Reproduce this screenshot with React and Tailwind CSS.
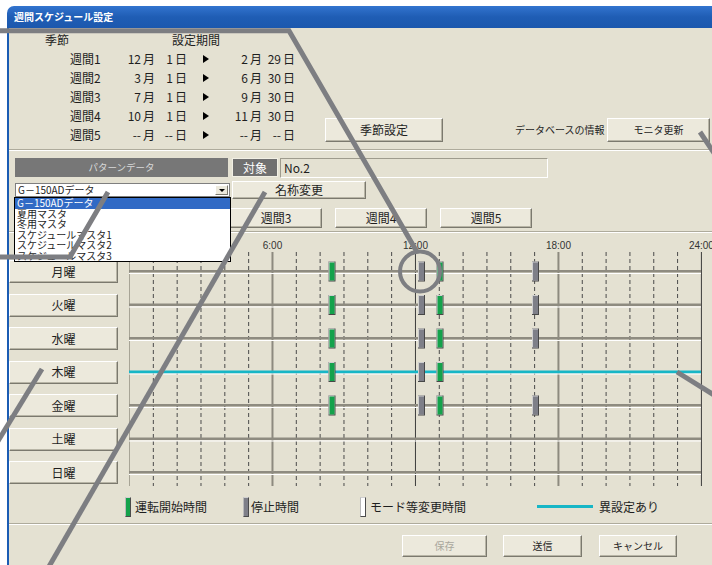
import React from 'react';

const btn =
  'flex items-center justify-center bg-[#ece9dc] border border-t-white border-l-white border-r-[#7b796e] border-b-[#7b796e] shadow-[inset_-1px_-1px_0_#b8b5a6] leading-none';

const weeks = [
  ['週間1', '12', '1', '2', '29'],
  ['週間2', '3', '1', '6', '30'],
  ['週間3', '7', '1', '9', '30'],
  ['週間4', '10', '1', '11', '30'],
  ['週間5', '--', '--', '--', '--'],
];

const patterns = ['G－150ADデータ', '夏用マスタ', '冬用マスタ', 'スケジュールマスタ1', 'スケジュールマスタ2', 'スケジュールマスタ3'];

const days = ['月曜', '火曜', '水曜', '木曜', '金曜', '土曜', '日曜'];
const rowY = [271.5, 305, 338.5, 372, 405.5, 439, 472.5];
const full = [['g', 333], ['s', 422.5], ['g', 441], ['s', 536.5]];
const marks = [full, full, full, full.slice(0, 3), full, [], []];

const X = (h) => 130.5 + h * 23.83;

function Groove() {
  return <div className="h-[2px] border-t border-[#aeab9c] border-b border-b-white" />;
}

function Marker({ color }) {
  return <div className={`w-[6px] h-[20px] border border-[#4b4b4b] border-l-[#b9b9b9] border-t-[#d0d0d0] ${color}`} />;
}

function Timeline() {
  const hours = Array.from({ length: 25 }, (_, h) => h);
  return (
    <svg width="600" height="257" viewBox="120 233 600 257" className="block">
      {[6, 12, 18, 24].map((h) => (
        <text key={h} x={X(h)} y="249" textAnchor="middle" fontSize="10" fill="#333" fontFamily="Liberation Sans, sans-serif">
          {h}:00
        </text>
      ))}
      {hours.map((h) => {
        const x = X(h);
        if (h === 0) return <line key={h} x1={x} x2={x} y1="252" y2="486" stroke="#a7a496" strokeWidth="1" />;
        if (h === 6 || h === 18) return <line key={h} x1={x} x2={x} y1="252" y2="486" stroke="#8d8a7f" strokeWidth="2" />;
        if (h === 12 || h === 24) return <line key={h} x1={x} x2={x} y1="252" y2="486" stroke="#3c3c3c" strokeWidth="1" />;
        return <line key={h} x1={x} x2={x} y1="252" y2="486" stroke="#4a4a4a" strokeWidth="1" strokeDasharray="4 3" />;
      })}
      {rowY.map((y, i) => (
        <g key={y}>
          <rect x="130" y={y - 1.5} width="572" height={i === 3 ? 3 : 2.5} fill={i === 3 ? '#17b6c6' : '#8e8b80'} />
          <rect x="130" y={y + 1.5} width="572" height="1" fill="#ffffff" />
          {marks[i].map(([k, x]) => (
            <g key={x}>
              <rect x={x - 3.5} y={y - 10} width="7" height="20" fill="#474747" />
              <rect x={x - 3.5} y={y - 10} width="6" height="19" fill="#cfcfcf" />
              <rect x={x - 2.5} y={y - 9} width="5" height="18" fill={k === 'g' ? '#14a24b' : '#7e7f88'} />
            </g>
          ))}
        </g>
      ))}
    </svg>
  );
}

export default function App() {
  return (
    <div className="relative w-[712px] h-[565px] overflow-hidden bg-white font-['Noto_Sans_CJK_JP',sans-serif] text-[#1e1e1e]">
      <div className="ml-[7px] mt-[6px] w-[712px] flex flex-col">
        {/* title bar */}
        <div className="h-[22px] rounded-tl-[7px] bg-gradient-to-b from-[#3274cf] via-[#1f5db4] to-[#1b58ae] flex items-center pl-[7px]">
          <span className="text-white text-[10px] font-bold leading-none">週間スケジュール設定</span>
        </div>

        <div className="border-l-2 border-[#1b5cb3] bg-[#e4e1d2] h-[540px] flex flex-col">
          {/* seasons */}
          <div className="flex h-[121px]">
            <div className="w-[316px] pt-[2px] text-[12px] leading-none">
              <div className="flex h-[19px] items-center">
                <span className="ml-[36px]">季節</span>
                <span className="ml-[103px]">設定期間</span>
              </div>
              {weeks.map(([n, m1, d1, m2, d2]) => (
                <div key={n} className="flex h-[19px] items-center pl-[61px]">
                  <span className="w-[55px]">{n}</span>
                  <span className="w-[16px] text-right">{m1}</span>
                  <span className="w-[15px] pl-[2px]">月</span>
                  <span className="w-[17px] text-right">{d1}</span>
                  <span className="w-[16px] pl-[2px]">日</span>
                  <span className="w-[33px] flex justify-center">
                    <span className="border-y-[4.5px] border-y-transparent border-l-[6px] border-l-black" />
                  </span>
                  <span className="w-[26px] text-right">{m2}</span>
                  <span className="w-[15px] pl-[2px]">月</span>
                  <span className="w-[18px] text-right">{d2}</span>
                  <span className="pl-[2px]">日</span>
                </div>
              ))}
            </div>
            <div className={`${btn} self-end mb-[7px] w-[118px] h-[24px] text-[12px]`}>季節設定</div>
            <div className="self-end mb-[7px] ml-[72px] flex items-center">
              <span className="text-[10px] leading-none w-[92px]">データベースの情報</span>
              <div className={`${btn} w-[103px] h-[24px] text-[10px]`}>モニタ更新</div>
            </div>
          </div>
          <Groove />

          {/* pattern data */}
          <div className="h-[80px] flex flex-col">
            <div className="flex mt-[7px] items-start">
              <div className="ml-[6px] w-[213px] h-[19px] bg-[#777777] flex items-center justify-center text-[9.5px] text-[#d9d9d9] leading-none">
                パターンデータ
              </div>
              <div className="ml-[4px] w-[46px] h-[19px] bg-[#707070] border border-[#f1efe4] flex items-center justify-center text-[12px] text-white leading-none">
                対象
              </div>
              <div className="ml-[2px] w-[268px] h-[20px] border border-[#9e9b8d] border-r-white border-b-white flex items-center pl-[3px] text-[12px] leading-none">
                No.2
              </div>
            </div>
            <div className="flex mt-[3px] items-center h-[18px]">
              <div className="relative ml-[6px] w-[215px] h-[14px] bg-white border border-[#7f7f7f] flex items-center">
                <span className="pl-[2px] text-[10px] leading-none">G－150ADデータ</span>
                <div className="ml-auto mr-[1px] w-[13px] h-[10px] bg-[#ece9dc] border border-t-white border-l-white border-r-[#7b796e] border-b-[#7b796e] flex items-center justify-center">
                  <span className="border-x-[3px] border-x-transparent border-t-[3px] border-t-black" />
                </div>
                <div className="absolute top-[13px] left-[-2px] w-[217px] bg-white border border-black z-10">
                  {patterns.map((p, i) => (
                    <div
                      key={p}
                      className={`h-[10.5px] pl-[2px] text-[10px] leading-[10.5px] whitespace-nowrap ${
                        i === 0 ? 'bg-[#316ac5] text-white' : 'text-[#1e1e1e]'
                      }`}
                    >
                      {p}
                    </div>
                  ))}
                </div>
              </div>
              <div className={`${btn} ml-[2px] w-[134px] h-[18px] text-[12px]`}>名称変更</div>
            </div>
            <div className="flex mt-[9px] ml-[11px] gap-[13px]">
              {['週間1', '週間2', '週間3', '週間4', '週間5'].map((w) => (
                <div key={w} className={`${btn} w-[92px] h-[20px] text-[12px]`}>
                  {w}
                </div>
              ))}
            </div>
          </div>
          <Groove />

          {/* timeline */}
          <div className="flex h-[257px]">
            <div className="w-[110px] pt-[27px] flex flex-col gap-[10.5px]">
              {days.map((d) => (
                <div key={d} className={`${btn} h-[23px] text-[12px]`}>
                  {d}
                </div>
              ))}
            </div>
            <div className="ml-[1px]">
              <Timeline />
            </div>
          </div>

          {/* legend */}
          <div className="flex items-center h-[33px] pl-[116px] text-[12px] leading-none">
            <div className="w-[118px] flex items-center gap-[4px]">
              <Marker color="bg-[#14a24b]" />
              <span>運転開始時間</span>
            </div>
            <div className="w-[117px] flex items-center gap-[2px]">
              <Marker color="bg-[#7e7f88]" />
              <span>停止時間</span>
            </div>
            <div className="w-[177px] flex items-center gap-[4px]">
              <Marker color="bg-white" />
              <span>モード等変更時間</span>
            </div>
            <div className="flex items-center gap-[6px]">
              <div className="w-[56px] h-[3px] bg-[#17b6c6]" />
              <span>異設定あり</span>
            </div>
          </div>
          <Groove />

          {/* footer buttons */}
          <div className="flex mt-[10px] ml-[393px] text-[10px]">
            <div className={`${btn} w-[85px] h-[22px] text-[#a9a79c]`}>保存</div>
            <div className={`${btn} ml-[16px] w-[79px] h-[22px]`}>送信</div>
            <div className={`${btn} ml-[17px] w-[78px] h-[22px]`}>キャンセル</div>
          </div>
        </div>
      </div>

      {/* callout lines of the manual */}
      <svg className="absolute inset-0 pointer-events-none z-20" width="712" height="565" viewBox="0 0 712 565">
        <g stroke="#7d7e82" strokeWidth="5" fill="none" strokeLinejoin="miter">
          <polyline points="-2,30.8 289,30.8 417,252" />
          <circle cx="420" cy="271.5" r="20" strokeWidth="4" />
          <polyline points="-2,257 70,257 108,192" />
          <line x1="42" y1="369" x2="-5" y2="446" />
          <line x1="265" y1="192" x2="47" y2="570" />
          <line x1="700" y1="132" x2="722" y2="165" />
          <line x1="677" y1="372" x2="722" y2="400" />
        </g>
      </svg>
    </div>
  );
}
